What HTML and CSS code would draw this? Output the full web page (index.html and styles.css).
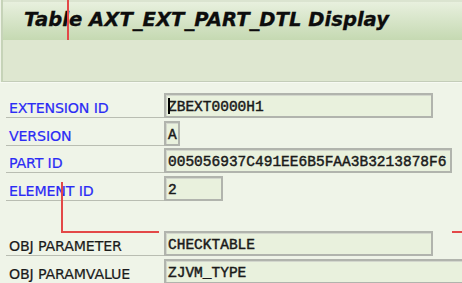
FILE: index.html
```html
<!DOCTYPE html>
<html lang="en">
<head>
    <meta charset="UTF-8">
    <meta name="viewport" content="width=device-width, initial-scale=1.0">
    <title>Table AXT_EXT_PART_DTL Display</title>
    <link rel="stylesheet" href="styles.css">
</head>
<body>
    <div class="screen">
        <div class="header">
            <div class="titlebar">
                <h1>Table AXT_EXT_PART_DTL Display</h1>
            </div>
            <div class="toolbar"></div>
        </div>

        <div class="content">
            <div class="row">
                <span class="key">EXTENSION ID</span>
                <div class="field field-long"><span class="cursor"></span>ZBEXT0000H1</div>
            </div>
            <div class="row row-tight">
                <span class="key">VERSION</span>
                <div class="field field-char">A</div>
            </div>
            <div class="row">
                <span class="key">PART ID</span>
                <div class="field field-guid">005056937C491EE6B5FAA3B3213878F6</div>
            </div>
            <div class="row">
                <span class="key">ELEMENT ID</span>
                <div class="field field-num">2</div>
            </div>

            <div class="spacer"></div>

            <div class="row">
                <span class="key plain">OBJ PARAMETER</span>
                <div class="field field-long">CHECKTABLE</div>
            </div>
            <div class="row">
                <span class="key plain">OBJ PARAMVALUE</span>
                <div class="field field-wide">ZJVM_TYPE</div>
            </div>
        </div>

        <!-- red annotation marks drawn over the screenshot -->
        <div class="mark mark-title"></div>
        <div class="mark mark-down"></div>
        <div class="mark mark-across"></div>
        <div class="mark mark-edge"></div>
    </div>
</body>
</html>
```

FILE: styles.css
```css
/* SAP GUI green theme */
body {
    margin: 0;
    background-color: #eff4e8;
    font-family: "DejaVu Sans", Verdana, sans-serif;
    overflow: hidden;
}

.screen {
    position: relative;
    width: 462px;
    height: 283px;
    overflow: hidden;
}

.header {
    margin-left: 1px;
    border-left: 2px solid #c6d3b8;
}

.titlebar {
    height: 38px;
    border-top: 2px solid #dbe4d0;
    background: linear-gradient(#e8f0de, #c5d9b2);
}

.titlebar h1 {
    margin: 0;
    padding-left: 21px;
    font-size: 19.6px;
    font-weight: bold;
    font-style: italic;
    line-height: 36px;
    color: #0d0d0d;
    -webkit-text-stroke: 0.3px #0d0d0d;
}

.toolbar {
    height: 41px;
    background-color: #dee7d0;
    border-bottom: 1px solid #c4cdb9;
}

.content {
    padding-top: 10px;
    border-top: 1px solid #f7faf3;
}

.row {
    display: grid;
    grid-template-columns: 158px auto;
    align-items: start;
    height: 28px;
    margin-left: 6px;
}

.row-tight {
    height: 27px;
}

.key {
    display: flex;
    align-items: flex-end;
    box-sizing: border-box;
    height: 25px;
    padding: 0 0 1px 3px;
    border-bottom: 1px solid #b9bdb2;
    font-size: 14.2px;
    letter-spacing: -0.15px;
    color: #2b2bf5;
    -webkit-text-stroke: 0.2px #2b2bf5;
}

.key.plain {
    color: #1b1b1b;
    -webkit-text-stroke: 0.2px #1b1b1b;
}

.field {
    position: relative;
    box-sizing: border-box;
    height: 25px;
    padding: 3px 0 0 2px;
    border: 2px solid #b1b4ad;
    box-shadow: inset 1px 1px 0 #d3d7cd;
    background-color: #e9f1dd;
    font-family: "Liberation Mono", "Courier New", monospace;
    font-size: 14.5px;
    line-height: 18px;
    color: #1a1a1a;
    -webkit-text-stroke: 0.45px #1a1a1a;
    white-space: nowrap;
}

.field-long { width: 269px; }
.field-char { width: 16px; }
.field-guid { width: 288px; }
.field-num  { width: 59px; }
.field-wide { width: 320px; }

.cursor {
    position: absolute;
    left: 2px;
    top: 3px;
    width: 2px;
    height: 16px;
    background-color: #000;
}

.spacer {
    height: 27px;
}

.mark {
    position: absolute;
    background-color: #e34848;
}

.mark-title {
    left: 67px;
    top: 0;
    width: 2px;
    height: 40px;
}

.mark-down {
    left: 61px;
    top: 182px;
    width: 2px;
    height: 51px;
}

.mark-across {
    left: 61px;
    top: 231px;
    width: 98px;
    height: 2px;
}

.mark-edge {
    left: 452px;
    top: 231px;
    width: 10px;
    height: 2px;
}
```
